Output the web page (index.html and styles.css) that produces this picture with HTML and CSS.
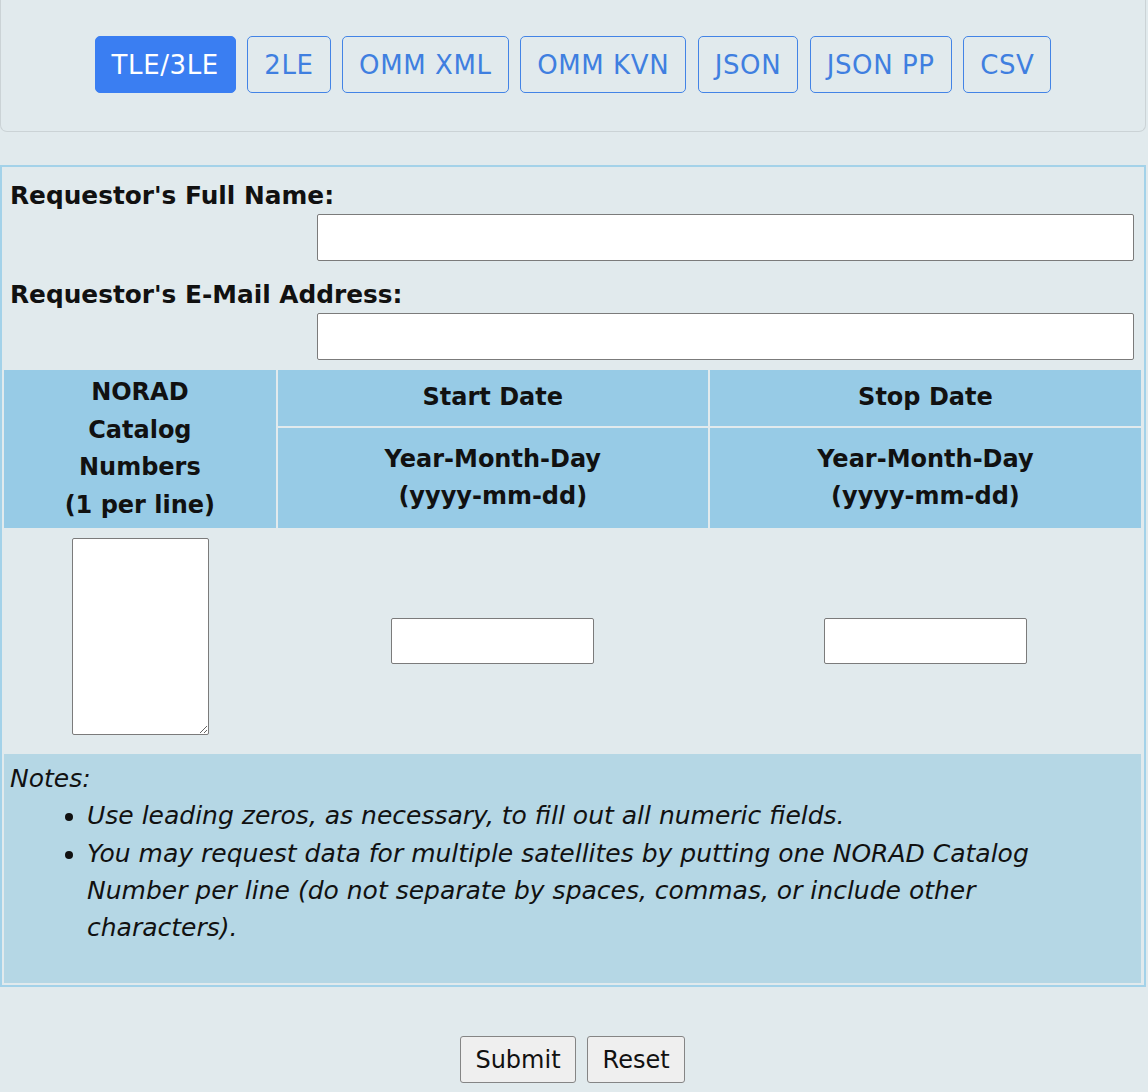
FILE: index.html
```html
<!DOCTYPE html>
<html>
<head>
<meta charset="utf-8">
<link rel="stylesheet" href="styles.css">
</head>
<body>
<div class="page">
  <div class="format-panel">
    <div class="format-group">
      <button class="fmt active">TLE/3LE</button>
      <button class="fmt">2LE</button>
      <button class="fmt">OMM XML</button>
      <button class="fmt">OMM KVN</button>
      <button class="fmt">JSON</button>
      <button class="fmt">JSON PP</button>
      <button class="fmt">CSV</button>
    </div>
  </div>

  <form class="req-form">
    <div class="ident">
      <div class="label">Requestor's Full Name:</div>
      <div class="field-row"><input class="text-in wide" type="text"></div>
      <div class="label second">Requestor's E-Mail Address:</div>
      <div class="field-row"><input class="text-in wide" type="text"></div>
    </div>

    <table class="grid">
      <colgroup>
        <col class="c1"><col class="c2"><col class="c3">
      </colgroup>
      <tr>
        <th rowspan="2" class="hd">NORAD<br>Catalog<br>Numbers<br>(1 per line)</th>
        <th class="hd short">Start Date</th>
        <th class="hd short">Stop Date</th>
      </tr>
      <tr>
        <th class="hd">Year-Month-Day<br>(yyyy-mm-dd)</th>
        <th class="hd">Year-Month-Day<br>(yyyy-mm-dd)</th>
      </tr>
      <tr>
        <td class="body-cell"><textarea class="catalog"></textarea></td>
        <td class="body-cell"><input class="text-in date" type="text"></td>
        <td class="body-cell"><input class="text-in date" type="text"></td>
      </tr>
      <tr>
        <td colspan="3" class="notes">
          <div class="notes-title">Notes:</div>
          <ul class="notes-list">
            <li>Use leading zeros, as necessary, to fill out all numeric fields.</li>
            <li>You may request data for multiple satellites by putting one NORAD Catalog Number per line (do not separate by spaces, commas, or include other characters).</li>
          </ul>
        </td>
      </tr>
    </table>
  </form>

  <div class="actions">
    <button class="plain-btn" type="button">Submit</button>
    <button class="plain-btn" type="button">Reset</button>
  </div>
</div>
</body>
</html>
```

FILE: styles.css
```css
html, body {
  margin: 0;
  padding: 0;
  background: #e1eaed;
}

body {
  font-family: "DejaVu Sans", Verdana, sans-serif;
  color: #111;
}

.page {
  width: 1146px;
}

.format-panel {
  border: 1px solid #cbd3d6;
  border-top: none;
  border-radius: 0 0 7px 7px;
  padding: 36px 0 38px;
}

.format-group {
  display: flex;
  justify-content: center;
  gap: 11.5px;
}

.fmt {
  font-family: "DejaVu Sans", Verdana, sans-serif;
  font-size: 26px;
  letter-spacing: 0.6px;
  height: 57px;
  padding: 1px 16px 0;
  background: transparent;
  color: #3f7fe0;
  border: 1.5px solid #4384e6;
  border-radius: 5px;
}

.fmt.active {
  background: #3a7ef2;
  border-color: #3a7ef2;
  color: #fff;
}

.req-form {
  margin: 33px 0 0;
  border: 2px solid #a3d2e9;
}

.ident {
  padding: 10px 10px 8px 8px;
}

.label {
  font-size: 24.8px;
  font-weight: bold;
  line-height: 37px;
}

.label.second {
  margin-top: 15px;
}

.field-row {
  display: flex;
  justify-content: flex-end;
}

.text-in {
  box-sizing: border-box;
  background: #fff;
  border: 1.5px solid #7b7b7b;
  border-radius: 2px;
  font-size: 20px;
}

.text-in.wide {
  width: 817px;
  height: 47px;
}

.text-in.date {
  width: 203px;
  height: 46px;
}

.grid {
  width: 1141px;
  border-collapse: separate;
  border-spacing: 2.5px;
  margin: 0;
  table-layout: fixed;
}

.c1 { width: 271px; }
.c2 { width: 429px; }
.c3 { width: 430px; }

.hd {
  background: #97cbe6;
  font-size: 24px;
  font-weight: bold;
  line-height: 37.5px;
  padding: 4px;
  text-align: center;
  vertical-align: middle;
}

.hd.short {
  height: 48px;
}

.body-cell {
  height: 222px;
  padding: 0;
  text-align: center;
  vertical-align: middle;
}

.catalog {
  box-sizing: border-box;
  width: 137px;
  height: 197px;
  margin: 0 0 10px 1px;
  border: 1.5px solid #7b7b7b;
  border-radius: 2px;
  background: #fff;
  vertical-align: middle;
}

.notes {
  background: #b5d7e5;
  font-style: italic;
  font-size: 25px;
  line-height: 37.3px;
  padding: 6px 60px 0 6px;
  vertical-align: top;
  height: 223px;
}

.notes-list {
  margin: 0 0 37px;
  padding-left: 77px;
}

.actions {
  display: flex;
  justify-content: center;
  gap: 11px;
  margin-top: 49px;
  padding-right: 1px;
}

.plain-btn {
  font-family: "DejaVu Sans", Verdana, sans-serif;
  font-size: 24px;
  height: 47px;
  padding: 0 14.5px;
  background: #efefef;
  color: #111;
  border: 1.5px solid #858585;
  border-radius: 3px;
}
```
